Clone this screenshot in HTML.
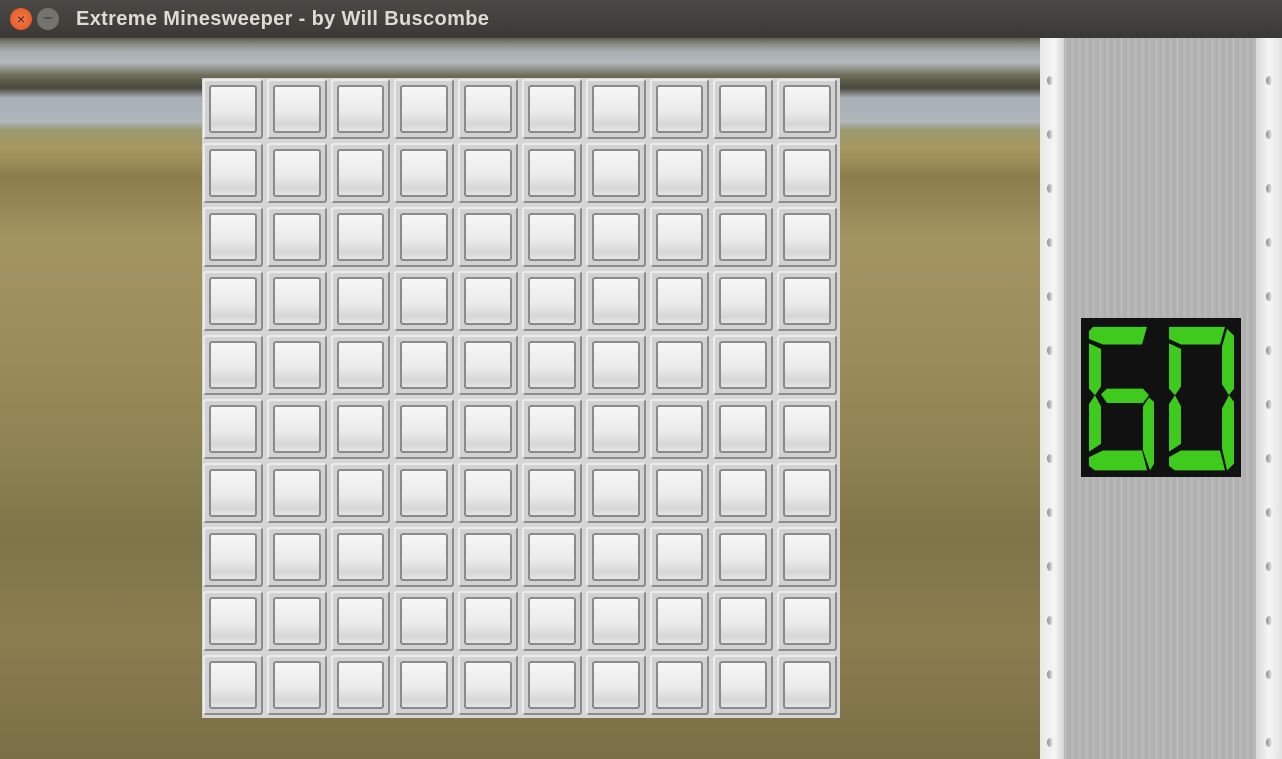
<!DOCTYPE html>
<html><head><meta charset="utf-8"><style>
*{margin:0;padding:0;box-sizing:border-box}
body{width:1282px;height:759px;overflow:hidden;background:#3c3b37;font-family:"Liberation Sans",sans-serif;position:relative}
.title{position:absolute;left:0;top:0;width:1282px;height:38px;background:linear-gradient(#4a4945,#3a3935);}
.title span{position:absolute;left:76px;top:8px;color:#dfdbd2;font-weight:bold;font-size:20px;letter-spacing:0.35px}
.cl{position:absolute;left:10px;top:8px;width:22px;height:22px;border-radius:50%;background:radial-gradient(#f47a4a,#e2531d);color:#3a2a20;font-size:14px;text-align:center;line-height:22px}
.mn{position:absolute;left:37px;top:8px;width:22px;height:22px;border-radius:50%;background:#75736e;color:#3c3b37;text-align:center;line-height:20px;font-size:16px}
.bg{position:absolute;left:0;top:38px;width:1040px;height:721px;background:
linear-gradient(180deg,#5b5c52 0px,#8a8b80 6px,#a8afb3 14px,#b4bbc0 24px,#6a6a55 38px,#48483c 50px,#a7b0b6 60px,#b0b6ba 84px,#9a9870 92px,#a89760 110px,#8b7d4c 140px,#a39462 200px,#9c8e5c 300px,#8f8453 400px,#7f7548 500px,#8a7e50 600px,#7a6f45 721px);}
.grid{position:absolute;left:202px;top:78px;width:638px;height:640px;background:#d6d6d6;display:grid;grid-template-columns:repeat(10,63.8px);grid-template-rows:repeat(10,64px)}
.grid i{display:block;margin:1px 3px 3px 1px;border-radius:3px;background:#d2d2d2;border:2px solid;border-color:#ececec #8c8c8c #8c8c8c #ececec;position:relative}
.grid i:after{content:"";position:absolute;left:4px;top:4px;right:4px;bottom:4px;border:2px solid #8a8a8a;border-radius:3px;background:linear-gradient(#f6f6f6,#ebebeb 55%,#d6d6d6 85%,#e6e6e6)}
.side{position:absolute;left:1040px;top:38px;width:242px;height:721px;background:repeating-linear-gradient(90deg,#b4b4b4 0,#acacac 2px,#bcbcbc 4px,#b0b0b0 7px);}
.ls{position:absolute;left:0;top:0;width:24px;height:721px;background:linear-gradient(90deg,#e8e8e8,#f6f6f6 60%,#d6d6d6)}
.rs{position:absolute;right:0;top:0;width:26px;height:721px;background:linear-gradient(90deg,#d8d8d8,#f6f6f6 50%,#e2e2e2)}
.r{position:absolute;width:6px;height:9px;border-radius:50%;background:linear-gradient(90deg,#888,#eee)}
.disp{position:absolute;left:41px;top:280px;width:160px;height:159px;background:#111}
</style></head><body>
<div class="title"><div class="cl">×</div><div class="mn">–</div><span>Extreme Minesweeper - by Will Buscombe</span></div>
<div class="bg"></div>
<div class="grid">
<i></i><i></i><i></i><i></i><i></i><i></i><i></i><i></i><i></i><i></i>
<i></i><i></i><i></i><i></i><i></i><i></i><i></i><i></i><i></i><i></i>
<i></i><i></i><i></i><i></i><i></i><i></i><i></i><i></i><i></i><i></i>
<i></i><i></i><i></i><i></i><i></i><i></i><i></i><i></i><i></i><i></i>
<i></i><i></i><i></i><i></i><i></i><i></i><i></i><i></i><i></i><i></i>
<i></i><i></i><i></i><i></i><i></i><i></i><i></i><i></i><i></i><i></i>
<i></i><i></i><i></i><i></i><i></i><i></i><i></i><i></i><i></i><i></i>
<i></i><i></i><i></i><i></i><i></i><i></i><i></i><i></i><i></i><i></i>
<i></i><i></i><i></i><i></i><i></i><i></i><i></i><i></i><i></i><i></i>
<i></i><i></i><i></i><i></i><i></i><i></i><i></i><i></i><i></i><i></i>
</div>
<div class="side">
<div class="ls"></div><div class="rs"></div>
<div class="r" style="left:7px;top:38px"></div><div class="r" style="left:7px;top:92px"></div><div class="r" style="left:7px;top:146px"></div><div class="r" style="left:7px;top:200px"></div><div class="r" style="left:7px;top:254px"></div><div class="r" style="left:7px;top:308px"></div><div class="r" style="left:7px;top:362px"></div><div class="r" style="left:7px;top:416px"></div><div class="r" style="left:7px;top:470px"></div><div class="r" style="left:7px;top:524px"></div><div class="r" style="left:7px;top:578px"></div><div class="r" style="left:7px;top:632px"></div><div class="r" style="left:7px;top:700px"></div>
<div class="r" style="left:226px;top:38px"></div><div class="r" style="left:226px;top:92px"></div><div class="r" style="left:226px;top:146px"></div><div class="r" style="left:226px;top:200px"></div><div class="r" style="left:226px;top:254px"></div><div class="r" style="left:226px;top:308px"></div><div class="r" style="left:226px;top:362px"></div><div class="r" style="left:226px;top:416px"></div><div class="r" style="left:226px;top:470px"></div><div class="r" style="left:226px;top:524px"></div><div class="r" style="left:226px;top:578px"></div><div class="r" style="left:226px;top:632px"></div><div class="r" style="left:226px;top:700px"></div>
<div class="disp"><svg width="160" height="159" viewBox="0 0 160 144" preserveAspectRatio="none" fill="#3ecb1e">
<g>
<polygon points="12,8 66,8 61,24 22,24 8,19 8,12"/>
<polygon points="8,23 20,28 20,62 14,70 8,64"/>
<polygon points="20,69 26,64 62,64 68,70 62,77 26,77"/>
<polygon points="8,78 14,70 20,80 20,114 8,121"/>
<polygon points="8,126 22,120 61,120 66,138 14,138 8,134"/>
<polygon points="62,80 68,72 73,76 73,132 69,138 62,120"/>
</g>
<g>
<polygon points="88,8 144,8 139,24 100,24 88,19"/>
<polygon points="146,10 153,16 153,64 148,70 141,60 141,26"/>
<polygon points="88,23 100,28 100,62 94,70 88,64"/>
<polygon points="88,78 94,70 100,80 100,114 88,121"/>
<polygon points="88,126 100,120 139,120 144,138 94,138 88,134"/>
<polygon points="141,82 148,70 153,76 153,132 146,138 141,118"/>
</g>
</svg></div>
</div>
</body></html>
